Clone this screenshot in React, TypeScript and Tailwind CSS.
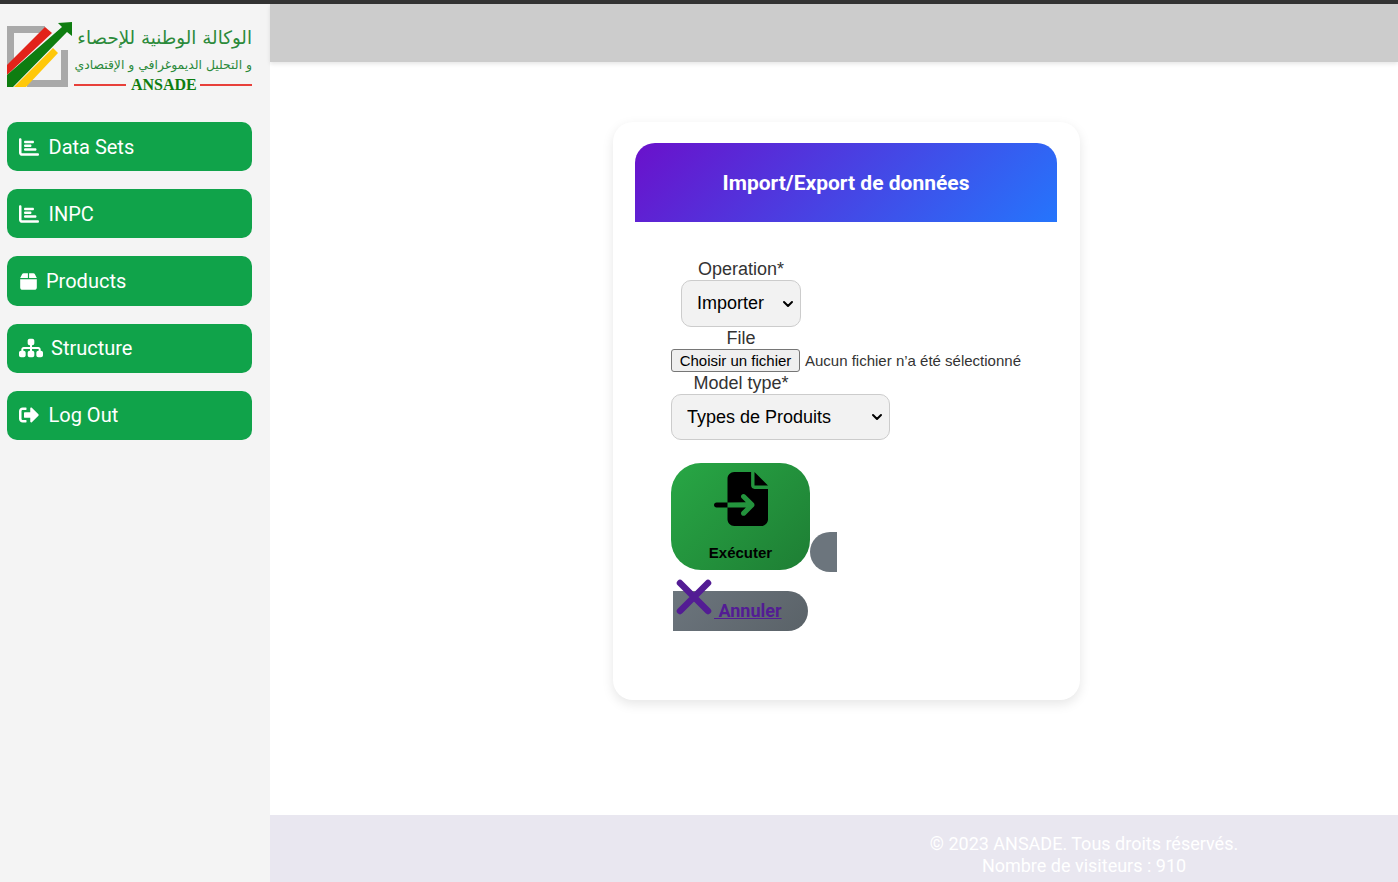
import { ReactNode } from "react";
import { FaSignOutAlt } from "react-icons/fa";
import { FaBox, FaChartBar, FaFileImport, FaSitemap } from "react-icons/fa6";
import { ChevronDown } from "lucide-react";

const menuItems: { label: string; icon: ReactNode; gap: string; box: string }[] = [
  { label: "Data Sets", icon: <FaChartBar className="w-5 h-5" />, gap: "gap-[9.5px]", box: "h-[49px]" },
  { label: "INPC", icon: <FaChartBar className="w-5 h-5" />, gap: "gap-[9.5px]", box: "h-[49px]" },
  { label: "Products", icon: <FaBox className="w-[19px] h-[19px]" />, gap: "gap-2", box: "h-[50px]" },
  { label: "Structure", icon: <FaSitemap className="w-6 h-6" />, gap: "gap-2", box: "h-[49px] pb-px" },
  { label: "Log Out", icon: <FaSignOutAlt className="w-5 h-5" />, gap: "gap-[9.5px]", box: "h-[49px] pb-px" },
];

const Logo = () => (
  <svg width="252" height="76" viewBox="0 0 252 76" className="block">
    <path d="M0 4h38v7H7v34H0z M54 28h7v37H20v-7h34z" fill="#a9a9a9" />
    <path d="M0 43L38 5l7 6L0 53z" fill="#e2231a" />
    <path d="M0 53L55 5L51 1L65 0V14L60 10L6 65H0z" fill="#0e7d10" />
    <path d="M46 26l5 5L19 65H7z" fill="#ffc80a" />
    <text x="245" y="22" textAnchor="start" direction="rtl" fill="#2b8a3a" className="text-[18.3px] font-['DejaVu_Sans',sans-serif]">
      الوكالة الوطنية للإحصاء
    </text>
    <text x="245" y="47" textAnchor="start" direction="rtl" fill="#2b8a3a" className="text-[12.4px] font-['DejaVu_Sans',sans-serif]">
      و التحليل الديموغرافي و الإقتصادي
    </text>
    <rect x="67" y="62" width="52" height="2" fill="#e8403a" />
    <rect x="193" y="62" width="52" height="2" fill="#e8403a" />
    <text x="124" y="68" fill="#0e7d10" className="text-[16px] font-['Liberation_Serif',serif] font-bold">
      ANSADE
    </text>
  </svg>
);

const SelectBox = ({ value, className }: { value: string; className: string }) => (
  <div className={`relative ${className}`}>
    <select className="block w-full h-full appearance-none pl-[15px] text-black bg-[#f2f2f2] border border-[#cccccc] rounded-[10px]">
      <option>{value}</option>
    </select>
    <ChevronDown
      className="absolute right-[5px] top-1/2 -translate-y-1/2 w-4 h-4 text-black pointer-events-none"
      strokeWidth={3}
    />
  </div>
);

const App = () => {
  return (
    <div className="h-[882px] flex flex-col overflow-hidden bg-white font-['Roboto',sans-serif]">
      <div className="h-1 bg-[#333333]"></div>

      <div className="flex flex-1 min-h-0">
        <aside className="w-[270px] shrink-0 bg-[#f4f4f4] pl-[7px] pt-[18px]">
          <Logo />
          <nav className="w-[245px] mt-[24px] flex flex-col gap-[18px]">
            {menuItems.map((item) => (
              <a
                key={item.label}
                className={`flex items-center ${item.gap} ${item.box} px-3 rounded-[10px] bg-[#10a34a] text-white text-[20px]`}
              >
                {item.icon}
                {item.label}
              </a>
            ))}
          </nav>
        </aside>

        <div className="flex-1 min-w-0 flex flex-col">
          <header className="h-[58px] shrink-0 bg-[#cccccc] shadow-[0_2px_4px_rgba(0,0,0,0.1)]"></header>

          <main className="flex-1 min-h-0 pt-[60px] pl-[343px]">
            <div className="w-[467px] h-[578px] rounded-[20px] bg-white pl-[22px] pr-[23px] pt-[21px] shadow-[0_4px_12px_rgba(0,0,0,0.1)]">
              <div className="h-[79px] pt-[2px] flex items-center justify-center rounded-t-[20px] bg-[linear-gradient(135deg,#6a11cb,#2575fc)]">
                <h2 className="text-white text-[21px] font-bold">Import/Export de données</h2>
              </div>

              <form className="w-[140px] ml-[36px] mt-[36px] text-center text-[18px] leading-[21px] text-[#333333] font-['Liberation_Sans',sans-serif]">
                <label className="block pt-px">Operation*</label>
                <SelectBox value="Importer" className="w-[120px] h-[47px] mx-auto" />

                <label className="block mt-px">File</label>
                <div className="flex items-center w-[360px] h-[23px] text-[15px]">
                  <button
                    type="button"
                    className="shrink-0 h-[23px] w-[129px] text-black bg-[#efefef] border border-[#767676] rounded-[3px]"
                  >
                    Choisir un fichier
                  </button>
                  <span className="ml-[5px] whitespace-nowrap">Aucun fichier n’a été sélectionné</span>
                </div>

                <label className="block mt-px">Model type*</label>
                <SelectBox value="Types de Produits" className="w-[219px] h-[46px]" />

                <div className="flex items-start w-[200px] mt-[23px]">
                  <button
                    type="button"
                    className="w-[139px] h-[107px] shrink-0 flex flex-col items-center rounded-[30px] bg-[linear-gradient(135deg,#28a745,#1e7e34)] text-black"
                  >
                    <FaFileImport className="w-[54px] h-[54px] mt-[9px]" />
                    <span className="mt-[18px] text-[15px] leading-[17px] font-bold">Exécuter</span>
                  </button>
                  <div className="w-[27px] h-[40px] mt-[69px] rounded-l-[20px] bg-[#6c757d]"></div>
                </div>

                <a className="relative block w-[135px] h-[40px] ml-[2px] mt-[19px] rounded-r-[20px] bg-[linear-gradient(135deg,#6c757d,#5a6268)] font-['Roboto',sans-serif] font-bold text-[#531c94] underline text-left">
                  <svg className="absolute left-[2px] -top-[13px]" width="38" height="38" viewBox="0 0 38 38">
                    <path d="M5 5L33 33M33 5L5 33" stroke="#531c94" strokeWidth="6.5" strokeLinecap="round" />
                  </svg>
                  <span className="block pl-[41px] pt-[9px] text-[18px]">&nbsp;Annuler</span>
                </a>
              </form>
            </div>
          </main>

          <footer className="h-[67px] shrink-0 bg-[#e9e7f0] pt-[18px] pl-[659px] text-[18px] leading-[22px] text-center text-white">
            <div className="w-[310px]">
              <p>© 2023 ANSADE. Tous droits réservés.</p>
              <p>Nombre de visiteurs : 910</p>
            </div>
          </footer>
        </div>
      </div>
    </div>
  );
};

export default App;
